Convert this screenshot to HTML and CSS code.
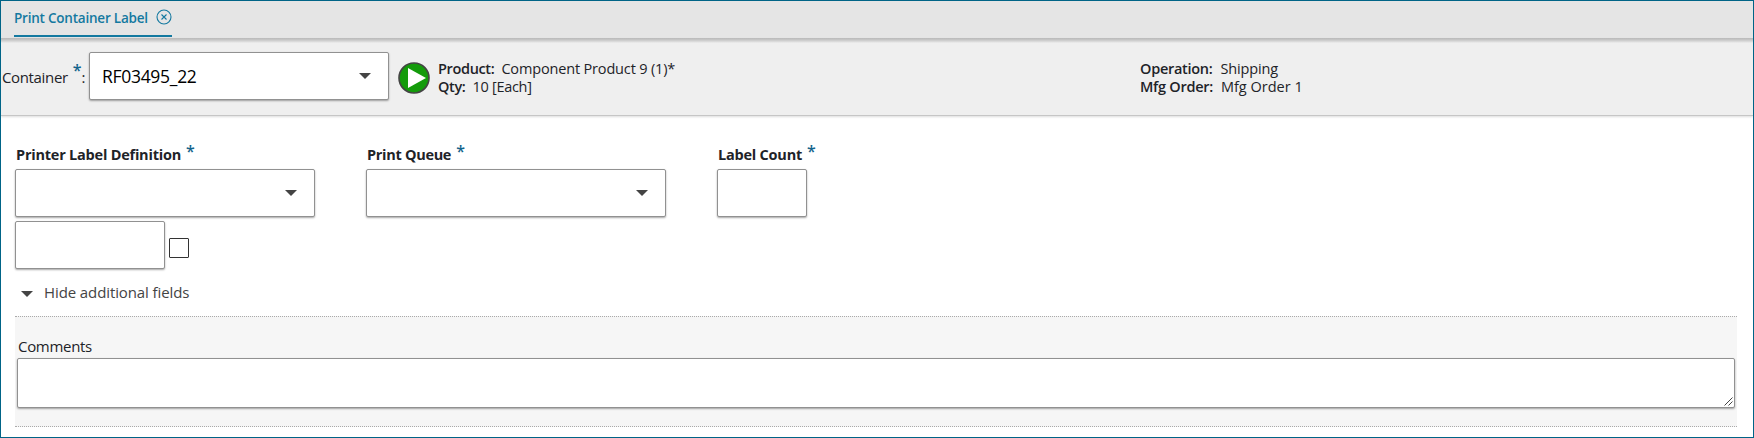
FILE: index.html
```html
<!DOCTYPE html>
<html lang="en">
<head>
<meta charset="utf-8">
<title>Print Container Label</title>
<link rel="stylesheet" href="styles.css">
</head>
<body>
<div class="page">
  <nav class="tabs">
    <div class="tab"><span class="tab-text">Print Container Label</span>
      <svg class="close" viewBox="0 0 16 16"><circle cx="8" cy="8" r="7"/><path d="M5.5 5.5l5 5M10.5 5.5l-5 5"/></svg>
    </div>
  </nav>
  <header class="header">
    <div class="container-label"><span class="t-container">Container</span><span class="star">*</span><span class="colon">:</span></div>
    <div class="box select header-select"><span class="value">RF03495_22</span><svg class="caret" viewBox="0 0 12 6"><path d="M0 0h12L6 6z"/></svg></div>
    <svg class="go" viewBox="0 0 32 32"><circle cx="16" cy="16" r="15"/><path d="M10 6v20l18-10z"/></svg>
    <div class="info info-product">
      <div><b class="t-product">Product:</b><span class="t-component">Component Product 9 (1)*</span></div>
      <div><b class="t-qty">Qty:</b><span class="t-each">10 [Each]</span></div>
    </div>
    <div class="info">
      <div><b class="t-operation">Operation:</b><span class="t-shipping">Shipping</span></div>
      <div><b class="t-mfg">Mfg Order:</b><span class="t-order">Mfg Order 1</span></div>
    </div>
  </header>
  <main class="form">
    <div class="row">
      <div class="field">
        <label class="label"><span class="t-definition">Printer Label Definition</span><span class="star">*</span></label>
        <div class="box select"><svg class="caret" viewBox="0 0 12 6"><path d="M0 0h12L6 6z"/></svg></div>
      </div>
      <div class="field">
        <label class="label"><span class="t-queue">Print Queue</span><span class="star">*</span></label>
        <div class="box select"><svg class="caret" viewBox="0 0 12 6"><path d="M0 0h12L6 6z"/></svg></div>
      </div>
      <div class="field">
        <label class="label"><span class="t-count">Label Count</span><span class="star">*</span></label>
        <div class="box count"></div>
      </div>
    </div>
    <div class="extra"><div class="box short"></div><div class="check"></div></div>
    <div class="toggle"><svg class="caret" viewBox="0 0 12 6"><path d="M0 0h12L6 6z"/></svg><span class="t-hide">Hide additional fields</span></div>
    <section class="comments">
      <label class="comments-label"><span class="t-comments">Comments</span></label>
      <div class="box area"><svg class="grip" viewBox="0 0 9 9"><path d="M.5 8.5l8-8M4.5 8.5l4-4"/></svg></div>
    </section>
  </main>
</div>
</body>
</html>
```
FILE: styles.css
```css
* { box-sizing: border-box; }
body { margin: 0; font-family: "Open Sans", "Noto Sans", sans-serif; color: #1e2328; background: #fff; }
svg { display: block; flex: none; }
span, b { white-space: nowrap; }
.page { width: 1754px; height: 438px; border: 1px solid #006487; overflow: hidden; }
.tabs { height: 37px; padding-left: 13px; background: #e5e5e5; display: flex; }
.tab { width: 158px; height: 36px; border-bottom: 2px solid #1479a0; display: flex; justify-content: space-between; color: #1479a0; font-size: 13.5px; font-weight: 600; line-height: 20px; padding: 7px 0 0 0; }
.tab-text { letter-spacing: -.22px; }
.close { width: 16px; height: 16px; margin-top: 1px; fill: none; stroke: #1479a0; stroke-width: 1.1; }
.header { height: 78px; background: linear-gradient(#b9b9b9, #c8c8c8 2px, #e0e0e0 4px, #efefef 5px); border-bottom: 1px solid #c6c6c6; box-shadow: 0 1px 2px #ddd; display: flex; align-items: flex-start; padding-top: 14px; }
.container-label { width: 88px; display: flex; padding: 15px 0 0 1px; font-size: 15px; font-weight: 500; line-height: 20px; }
.t-container { letter-spacing: -.35px; }
.star { color: #14648c; font-size: 16px; font-weight: 600; line-height: 20px; }
.container-label .star { margin: -7px 0 0 5px; }
.colon { margin-left: 0; }
.box { height: 48px; background: #fff; border: 1px solid #919191; border-radius: 2px; box-shadow: 0 1px 2px rgba(0, 0, 0, .35); }
.select { width: 300px; display: flex; align-items: center; justify-content: flex-end; padding-right: 17px; }
.header-select { justify-content: space-between; padding-left: 12px; }
.value { color: #000; font-size: 17.5px; line-height: 24px; letter-spacing: -.3px; }
.caret { width: 12px; height: 6px; fill: #444; }
.go { width: 32px; height: 32px; margin: 10px 0 0 9px; }
.go circle { fill: #149b0b; stroke: #444; stroke-width: 1.6; }
.go path { fill: #fff; }
.info { font-size: 14.5px; line-height: 18px; padding-top: 8px; }
.info b { font-weight: 600; margin-right: 8px; letter-spacing: -.28px; }
.info .t-product, .info .t-qty { margin-right: 7px; letter-spacing: -.35px; }
.t-component, .t-each, .t-shipping { letter-spacing: -.16px; }
.t-each { letter-spacing: -.3px; }
.info-product { width: 702px; margin-left: 8px; }
.form { padding: 29px 16px 0 14px; }
.row { display: flex; gap: 51px; }
.label { display: flex; height: 24px; padding-left: 1px; font-size: 14.5px; font-weight: 700; line-height: 20px; letter-spacing: -.22px; }
.t-queue { letter-spacing: -.3px; }
.label .star { margin: -4px 0 0 5px; }
.count { width: 90px; }
.extra { display: flex; margin-top: 4px; gap: 4px; }
.short { width: 150px; }
.check { width: 20px; height: 20px; margin-top: 17px; border: 1px solid #333; border-radius: 1px; background: #fff; }
.toggle { height: 47px; display: flex; gap: 11px; padding: 13px 0 0 6px; font-size: 15px; line-height: 20px; letter-spacing: -.1px; color: #444; }
.toggle .caret { margin-top: 9px; }
.comments { height: 111px; padding: 19px 2px 0; background: #f6f6f6; border-top: 1px dotted #aaa; border-bottom: 1px dotted #aaa; }
.comments-label { display: flex; height: 22px; padding-left: 1px; font-size: 15px; line-height: 20px; letter-spacing: -.3px; }
.area { height: 50px; display: flex; justify-content: flex-end; align-items: flex-end; padding: 1px; }
.grip { width: 9px; height: 9px; fill: none; stroke: #444; stroke-width: 1; }
```
